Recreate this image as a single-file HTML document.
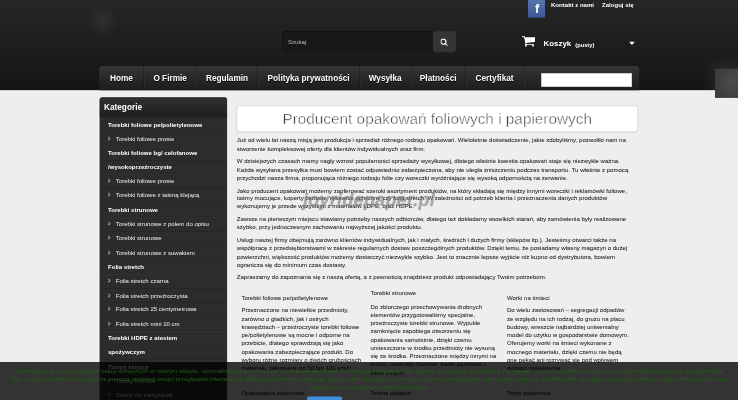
<!DOCTYPE html>
<html lang="pl"><head><meta charset="utf-8"><title>Producent opakowań foliowych i papierowych</title>
<style>
html,body{margin:0;padding:0;width:738px;height:400px;overflow:hidden;background:#eee}
#w{position:absolute;left:0;top:0;width:1341.82px;height:729.27px;overflow:hidden;transform-origin:0 0;transform:scale(0.55);filter:contrast(1.001);background:#eeeeee;font-family:"Liberation Sans",Arial,sans-serif;font-size:11px;color:#222}
#w *{box-sizing:border-box}
#hd{position:absolute;left:0;top:0;width:100%;height:164.0px;box-shadow:0 1.5px 0 #fbfbfb;background:linear-gradient(#262626,#1d1d1d 55%,#141414)}
#glow{position:absolute;left:156.36px;top:7.82px;width:61.82px;height:61.82px;background:radial-gradient(circle closest-side,rgba(75,85,80,.3),rgba(75,85,80,.22) 25%,rgba(75,85,80,.07) 65%,rgba(75,85,80,0))}
#fb{position:absolute;left:960.0px;top:0;width:30.91px;height:31.82px;background:linear-gradient(#5872ab,#3b5998);overflow:hidden}
#fb span{position:absolute;left:0;top:0;width:100%;text-align:center;font:bold 23px "Liberation Sans",sans-serif;color:#fff;line-height:31.82px;padding-left:2px}
.tl{position:absolute;top:1.3599999999999994px;font-weight:bold;font-size:11px;color:#fff;line-height:14px;white-space:nowrap}
.vs{position:absolute;top:0;width:1px;height:20.0px;background:#2c2c2c}
#sin{position:absolute;left:513.45px;top:56.73px;width:276.36px;height:38.0px;background:#181818;box-shadow:inset 0 1px 2px rgba(0,0,0,.5);border-radius:5px;color:#bbb;font-size:11px;line-height:38.0px;padding-left:10.18px}
#sbt{position:absolute;left:787.09px;top:56.73px;width:41.82px;height:38.0px;background:#353535;border-radius:5px}
#cart{position:absolute;left:948.36px;top:63.64px}
#ko{position:absolute;left:988.36px;top:68.55px;font-weight:bold;font-size:14.3px;color:#fff;line-height:20px;white-space:nowrap}
#ko small{font-size:10.4px;margin-left:7.5px;position:relative;top:1px}
#dd{position:absolute;left:1143.64px;top:75.64px;width:0;height:0;border-left:5px solid transparent;border-right:5px solid transparent;border-top:6px solid #fff}
#nav{position:absolute;left:180.36px;top:119.64px;width:981.45px;height:44.0px;overflow:hidden;background:linear-gradient(#363636,#2a2a2a 45%,#1c1c1c);border-radius:6px 6px 0 0;white-space:nowrap;font-size:0}
#nav a{display:inline-block;height:100%;text-align:center;color:#fff;font-weight:bold;font-size:15px;line-height:45.68px;border-right:1px solid #191919;box-shadow:1px 0 0 #3a3a3a;text-shadow:0 1px 1px #000}
#nbox{position:absolute;left:984.0px;top:133.09px;width:165.45px;height:24.91px;background:#fff;border:1px solid #bbb}
#tab{position:absolute;left:1300.0px;top:125.45px;width:54.55px;height:52.73px;background:radial-gradient(circle at 60% 45%,#4d4f4e,#3a3b3b 80%);box-shadow:0 0 24px 8px rgba(255,255,255,.075)}
#sb{position:absolute;left:180.73px;top:177.09px;width:232.73px;height:700px;background:#2c2c2c;border-radius:5px 5px 0 0;box-shadow:0 0 0 1.6px rgba(255,255,255,.7)}
#sb h3{margin:0;height:36.78px;line-height:36.18px;padding-left:8.36px;font-size:15px;font-weight:bold;color:#fff;background:linear-gradient(#303030,#1f1f1f);border-radius:5px 5px 0 0;border-bottom:1px solid #1a1a1a}
#sb ul{list-style:none;margin:0;padding:0}
#sb li{height:25.9px;line-height:25.9px;white-space:nowrap;font-size:11px;padding-left:15.64px;box-shadow:inset 0 1px 0 #333,inset 0 -1px 0 #202020}
#sb li.b{font-weight:bold;color:#fff}
#sb li.nb{box-shadow:inset 0 -1px 0 #202020}
#sb li.c{color:#f0f0f0}
#sb li .ch{display:inline-block;width:14.18px;font-size:11.5px;color:#f0f0f0;transform:scaleX(.72);transform-origin:0 50%}
#tt{position:absolute;left:429.82px;top:191.64px;width:730.18px;height:48.55px;background:#fff;border:1px solid #cdcdcd;-webkit-text-stroke:.85px #fff;border-radius:6px;box-shadow:0 1px 3px rgba(0,0,0,.08);text-align:center;font-size:27.9px;line-height:47.73px;color:#2e2e2e;white-space:nowrap}
#tx,.ct,.cb{-webkit-text-stroke:.08px #1a1a1a}
#tx{position:absolute;left:430.55px;top:248.0px;white-space:nowrap;line-height:14.85px;color:#1a1a1a}
#tx p{margin:0 0 8.2px}
.ct,.cb{position:absolute;white-space:nowrap;line-height:15.07px;color:#1e1e1e;font-size:11px}
#wm{position:absolute;left:550.91px;top:344.21999999999997px;font:italic bold 32.3px/40px "Liberation Sans",sans-serif;color:rgba(120,120,120,.45);-webkit-text-stroke:.5px rgba(120,120,120,.3);text-shadow:0 0 2px rgba(130,130,130,.3);white-space:nowrap;letter-spacing:.7px}
#ck{position:absolute;left:0;top:658.0px;width:100%;height:200px;background:rgba(0,0,0,.79);color:#1d6010;font-size:11.03px;line-height:14.45px;text-align:center;white-space:nowrap;padding-top:8.77px}
#ckb{position:absolute;left:557.64px;top:720.73px;width:64.73px;height:30px;background:#3d8edb;border-radius:3px;color:#fff;font-size:12px;line-height:30px;text-align:center}
</style></head><body>
<div id="w">
 <div id="hd">
  <div id="glow"></div>
  <div id="fb"><span>f</span></div>
  <div class="tl" style="left:1001.82px">Kontakt z nami</div>
  <div class="vs" style="left:1087.27px"></div>
  <div class="tl" style="left:1094.55px">Zaloguj się</div>
  <div class="vs" style="left:1160.0px"></div>
  <div id="sin">Szukaj</div>
  <div id="sbt"><svg style="position:absolute;left:14.32px;top:12.8px" width="13.5" height="13.5" viewBox="128 128 1664 1664"><path fill="#fff" d="M1216 832q0-185-131.500-316.500t-316.500-131.500-316.500 131.500-131.500 316.500 131.500 316.500 316.500 131.500 316.500-131.500 131.500-316.500zm512 832q0 52-38 90t-90 38q-54 0-90-38l-343-342q-179 124-399 124-143 0-273.500-55.500t-225-150-150-225-55.500-273.500 55.500-273.500 150-225 225-150 273.500-55.500 273.500 55.500 225 150 150 225 55.500 273.500q0 220-124 399l343 343q37 37 37 90z"/></svg></div>
  <svg id="cart" width="24.73" height="21.09" viewBox="0 128 1728 1536" preserveAspectRatio="none"><path fill="#fff" d="M704 1536q0 52-38 90t-90 38-90-38-38-90 38-90 90-38 90 38 38 90zm896 0q0 52-38 90t-90 38-90-38-38-90 38-90 90-38 90 38 38 90zm128-1088v512q0 24-16.500 42.500t-40.500 21.500l-1044 122q13 60 13 70 0 16-24 64h920q26 0 45 19t19 45-19 45-45 19h-1024q-26 0-45-19t-19-45q0-11 8-31.500t16-36 21.500-40 15.500-29.500l-177-823h-204q-26 0-45-19t-19-45 19-45 45-19h256q16 0 28.500 6.500t19.500 15.500 13 24.500 8 26 5.500 29.500 4.500 26h1201q26 0 45 19t19 45z"/></svg>
  <div id="ko">Koszyk<small>(pusty)</small></div>
  <div id="dd"></div>
  <div id="nav"><a style="width:82px">Home</a><a style="width:94.9px">O Firmie</a><a style="width:112px">Regulamin</a><a style="width:184.7px">Polityka prywatności</a><a style="width:93.7px">Wysyłka</a><a style="width:99.1px">Płatności</a><a style="width:106px">Certyfikat</a></div>
  <div id="nbox"></div>
  <div id="tab"></div>
 </div>
 <div id="sb"><h3>Kategorie</h3><ul>
<li class="b">Torebki foliowe pe/polietylenowe</li>
<li class="c"><span class="ch">&gt;</span>Torebki foliowe proste</li>
<li class="b">Torebki foliowe bg/ celofanowe</li>
<li class="b nb">/wysokoprzeźroczyste</li>
<li class="c"><span class="ch">&gt;</span>Torebki foliowe proste</li>
<li class="c"><span class="ch">&gt;</span>Torebki foliowe z taśmą klejącą</li>
<li class="b">Torebki strunowe</li>
<li class="c"><span class="ch">&gt;</span>Torebki strunowe z polem do opisu</li>
<li class="c"><span class="ch">&gt;</span>Torebki strunowe</li>
<li class="c"><span class="ch">&gt;</span>Torebki strunowe z suwakiem</li>
<li class="b">Folia stretch</li>
<li class="c"><span class="ch">&gt;</span>Folia stretch czarna</li>
<li class="c"><span class="ch">&gt;</span>Folia stretch przeźroczysta</li>
<li class="c"><span class="ch">&gt;</span>Folia stretch 25 centymetrowa</li>
<li class="c"><span class="ch">&gt;</span>Folia stretch mini 10 cm</li>
<li class="b">Torebki HDPE z atestem</li>
<li class="b nb">spożywczym</li>
<li class="b">Taśmy klejące</li>
<li class="c"><span class="ch">&gt;</span>Taśmy biurowe</li>
<li class="c"><span class="ch">&gt;</span>Taśmy do zamykarek</li>
<li class="c"><span class="ch">&gt;</span>Taśmy pakowe</li>
</ul></div>
 <div id="tt">Producent opakowań foliowych i papierowych</div>
 <div id="tx">
<p>Już od wielu lat naszą misją jest produkcja i sprzedaż różnego rodzaju opakowań. Wieloletnie doświadczenie, jakie zdobyliśmy, pozwoliło nam na<br>stworzenie kompleksowej oferty dla klientów indywidualnych oraz firm.</p>
<p>W dzisiejszych czasach mamy nagły wzrost popularności sprzedaży wysyłkowej, dlatego właśnie kwestia opakowań staje się niezwykle ważna.<br>Każda wysyłana przesyłka musi bowiem zostać odpowiednio zabezpieczona, aby nie uległa zniszczeniu podczas transportu. Tu właśnie z pomocą<br>przychodzi nasza firma, proponująca różnego rodzaju folie czy woreczki wyróżniające się wysoką odpornością na zerwanie.</p>
<p>Jako producent opakowań możemy zaoferować szeroki asortyment produktów, na który składają się między innymi woreczki i reklamówki foliowe,<br>taśmy mocujące, koperty biurowe, rękawice ochronne czy folia stretch. W zależności od potrzeb klienta i przeznaczenia danych produktów<br>wykonujemy je przede wszystkim z materiałów LDPE, oraz HDPE.</p>
<p>Zawsze na pierwszym miejscu stawiamy potrzeby naszych odbiorców, dlatego też dokładamy wszelkich starań, aby zamówienia były realizowane<br>szybko, przy jednoczesnym zachowaniu najwyższej jakości produktu.</p>
<p>Usługi naszej firmy obejmują zarówno klientów indywidualnych, jak i małych, średnich i dużych firmy (sklepów itp.). Jesteśmy otwarci także na<br>współpracę z przedsiębiorstwami w zakresie regularnych dostaw poszczególnych produktów. Dzięki temu, że posiadamy własny magazyn o dużej<br>powierzchni, większość produktów możemy dostarczyć niezwykle szybko. Jest to znacznie lepsze wyjście niż kupno od dystrybutora, bowiem<br>ogranicza się do minimum czas dostawy.</p>
<p>Zapraszamy do zapoznania się z naszą ofertą, a z pewnością znajdziesz produkt odpowiadający Twoim potrzebom.</p>
</div>
<div class="ct" style="left:438.91px;top:534.28px">Torebki foliowe pe/polietylenowe</div>
<div class="cb" style="left:438.91px;top:557.01px">Przeznaczone na niewielkie przedmioty,<br>zarówno o gładkich, jak i ostrych<br>krawędziach – przeźroczyste torebki foliowe<br>pe/polietylenowe są mocne i odporne na<br>przebicie, dlatego sprawdzają się jako<br>opakowania zabezpieczające produkt. Do<br>wyboru różne rozmiary o dwóch grubościach<br>materiału, pakowane po 50 lub 100 sztuk.</div>
<div class="ct" style="left:438.91px;top:707.92px">Opakowania papierowe</div>
<div class="ct" style="left:673.64px;top:526.1px">Torebki strunowe</div>
<div class="cb" style="left:673.64px;top:549.74px">Do zbiorczego przechowywania drobnych<br>elementów przygotowaliśmy specjalne,<br>przeźroczyste torebki strunowe. Wypukłe<br>zamknięcie zapobiega otworzeniu się<br>opakowania samoistnie, dzięki czemu<br>umieszczone w środku przedmioty nie wysuną<br>się ze środka. Przeznaczone między innymi na<br>śrubki, materiały biurowe, kartki pocztowe i<br>wiele innych.</div>
<div class="ct" style="left:673.64px;top:707.92px">Taśma pakowa</div>
<div class="ct" style="left:921.82px;top:535.19px">Worki na śmieci</div>
<div class="cb" style="left:921.82px;top:557.01px">Do wielu zastosowań – segregacji odpadów<br>ze względu na ich rodzaj, do gruzu na placu<br>budowy, wreszcie najbardziej uniwersalny<br>model do użytku w gospodarstwie domowym.<br>Oferujemy worki na śmieci wykonane z<br>mocnego materiału, dzięki czemu nie będą<br>one pękać ani rozrywać się pod wpływem<br>dużego wypełnienia.</div>
<div class="ct" style="left:921.82px;top:707.92px">Torby papierowe</div>

 <div id="wm">joyridepaper.pl</div>
 <div id="ck"><span style="word-spacing:.16px">Informujemy, iż w celu realizacji usług dostępnych w naszym sklepie, optymalizacji jego treści oraz dostosowania sklepu do Państwa indywidualnych potrzeb korzystamy z informacji zapisanych za pomocą plików cookies na urządzeniach końcowych użytkowników.</span><br>Pliki cookies można kontrolować za pomocą ustawień swojej przeglądarki internetowej. Dalsze korzystanie z naszego sklepu internetowego, bez zmiany ustawień przeglądarki internetowej oznacza, iż użytkownik akceptuje stosowanie plików cookies. Więcej informacji<br>zawartych jest w polityce prywatności sklepu.</div>
 <div id="ckb">Zamknij</div>
</div>
</body></html>
